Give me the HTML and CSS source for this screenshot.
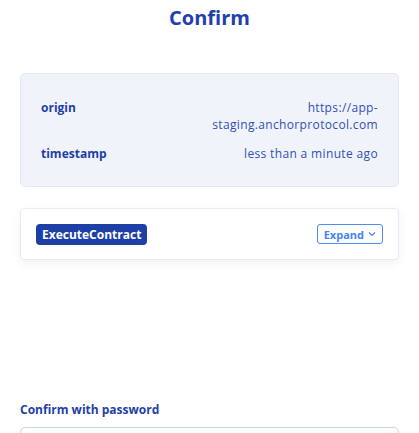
FILE: index.html
```html
<!DOCTYPE html>
<html>
<head>
<meta charset="utf-8">
<link rel="stylesheet" href="styles.css">
</head>
<body>
<div class="page">
  <h1 class="title">Confirm</h1>
  <section class="info">
    <div class="row">
      <span class="label">origin</span>
      <span class="value">https://app-<br>staging.anchorprotocol.com</span>
    </div>
    <div class="row">
      <span class="label">timestamp</span>
      <span class="value">less than a minute ago</span>
    </div>
  </section>
  <section class="msg">
    <span class="badge">ExecuteContract</span>
    <button class="expand">Expand <svg width="8" height="6" viewBox="0 0 8 6"><path d="M1 1.5 L4 4.5 L7 1.5" fill="none" stroke="currentColor" stroke-width="1.2"/></svg></button>
  </section>
  <div class="password">
    <label class="pw-label">Confirm with password</label>
    <div class="input"></div>
  </div>
</div>
</body>
</html>
```
FILE: styles.css
```css
* { box-sizing: border-box; }
html, body { margin: 0; padding: 0; background: #fff; }
body { font-family: "Open Sans", "Liberation Sans", sans-serif; color: #2043b5; overflow: hidden; height: 433px; }
.page { padding: 0 20px; }
.title { margin: 0; padding-top: 5px; font-size: 20px; line-height: 26px; font-weight: 700; text-align: center; color: #1f40ae; }
.info { margin-top: 42px; background: #f0f4fa; border: 1px solid #e2e8f4; border-radius: 5px; padding: 25px 20px 24px; display: flex; flex-direction: column; gap: 12px; }
.row { display: flex; justify-content: space-between; align-items: flex-start; font-size: 12px; line-height: 17px; }
.label { font-weight: 700; color: #1f3fa8; }
.value { text-align: right; color: #3050b8; letter-spacing: 0.35px; }
.msg { margin-top: 21px; height: 52px; background: #fff; border: 1px solid #e6eaf4; border-radius: 5px; box-shadow: 0 3px 8px rgba(30, 50, 120, 0.07); display: flex; align-items: center; justify-content: space-between; padding: 0 15px 0 15px; }
.badge { background: #1e3fa6; color: #fff; font-size: 12px; font-weight: 700; line-height: 21px; padding: 0 6px; border-radius: 4px; }
.expand { font-family: inherit; background: #fff; border: 1px solid #4d8bf5; color: #4584f0; border-radius: 3px; font-size: 11px; font-weight: 700; height: 20px; padding: 0 6px; display: flex; align-items: center; gap: 4px; }
.password { margin-top: 142px; }
.pw-label { display: block; font-size: 12px; font-weight: 700; line-height: 16px; color: #1f3fa8; }
.input { margin-top: 9px; height: 40px; border: 1px solid #cdd5e8; border-radius: 5px; }
```
